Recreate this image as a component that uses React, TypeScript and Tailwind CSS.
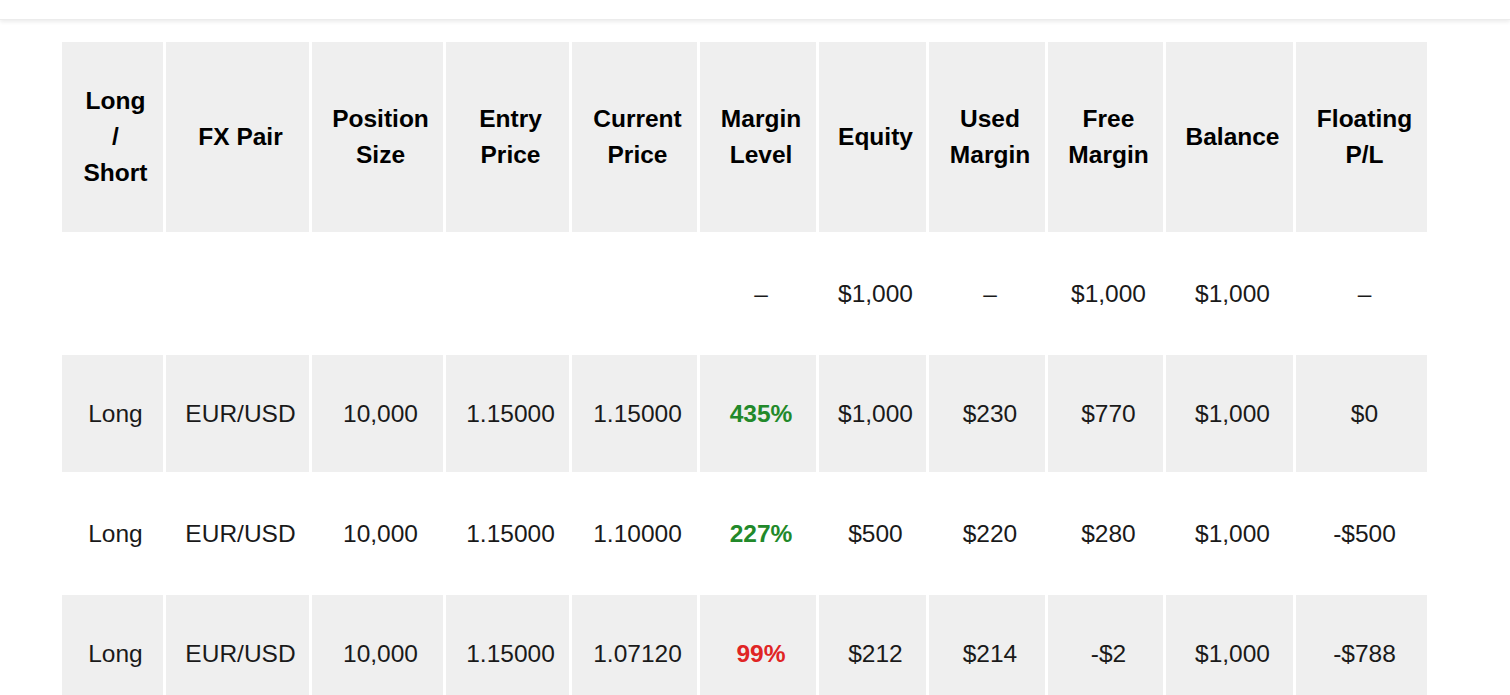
import React from 'react';

type Row = {
    side: string;
    pair: string;
    size: string;
    entry: string;
    current: string;
    margin: string;
    marginTone?: 'good' | 'bad';
    equity: string;
    used: string;
    free: string;
    balance: string;
    pl: string;
    shaded: boolean;
};

const columns = [
    { label: ['Long', '/', 'Short'], width: 'w-[101px]' },
    { label: ['FX Pair'], width: 'w-[143px]' },
    { label: ['Position', 'Size'], width: 'w-[131px]' },
    { label: ['Entry', 'Price'], width: 'w-[123px]' },
    { label: ['Current', 'Price'], width: 'w-[125px]' },
    { label: ['Margin', 'Level'], width: 'w-[116px]' },
    { label: ['Equity'], width: 'w-[107px]' },
    { label: ['Used', 'Margin'], width: 'w-[116px]' },
    { label: ['Free', 'Margin'], width: 'w-[115px]' },
    { label: ['Balance'], width: 'w-[127px]' },
    { label: ['Floating', 'P/L'], width: 'w-[131px]' },
];

const rows: Row[] = [
    { side: '', pair: '', size: '', entry: '', current: '', margin: '–', equity: '$1,000', used: '–', free: '$1,000', balance: '$1,000', pl: '–', shaded: false },
    { side: 'Long', pair: 'EUR/USD', size: '10,000', entry: '1.15000', current: '1.15000', margin: '435%', marginTone: 'good', equity: '$1,000', used: '$230', free: '$770', balance: '$1,000', pl: '$0', shaded: true },
    { side: 'Long', pair: 'EUR/USD', size: '10,000', entry: '1.15000', current: '1.10000', margin: '227%', marginTone: 'good', equity: '$500', used: '$220', free: '$280', balance: '$1,000', pl: '-$500', shaded: false },
    { side: 'Long', pair: 'EUR/USD', size: '10,000', entry: '1.15000', current: '1.07120', margin: '99%', marginTone: 'bad', equity: '$212', used: '$214', free: '-$2', balance: '$1,000', pl: '-$788', shaded: true },
];

export default function App() {
    return (
        <div className="min-h-screen bg-white font-['Liberation_Sans',Arial,sans-serif] text-[#1a1a1a]">
            {/* top bar */}
            <div className="h-[20px] bg-white shadow-[0_2px_4px_rgba(0,0,0,0.08)] border-b border-[#ececec]" />

            <div className="pl-[59px] pt-[19px]">
                <table className="border-separate border-spacing-[3px] text-[24.5px] leading-[36px] text-center">
                    <thead>
                        <tr>
                            {columns.map((c) => (
                                <th key={c.label.join(' ')} className={`${c.width} h-[190px] bg-[#efefef] font-bold text-black pl-[12px] pr-[6px]`}>
                                    {c.label.map((l) => (
                                        <div key={l}>{l}</div>
                                    ))}
                                </th>
                            ))}
                        </tr>
                    </thead>
                    <tbody>
                        {rows.map((r, i) => {
                            const cell = `h-[117px] pl-[12px] pr-[6px] ${r.shaded ? 'bg-[#efefef]' : 'bg-white'}`;
                            const tone =
                                r.marginTone === 'good'
                                    ? 'font-bold text-[#22892a]'
                                    : r.marginTone === 'bad'
                                        ? 'font-bold text-[#e02424]'
                                        : '';
                            return (
                                <tr key={i}>
                                    <td className={cell}>{r.side}</td>
                                    <td className={cell}>{r.pair}</td>
                                    <td className={cell}>{r.size}</td>
                                    <td className={cell}>{r.entry}</td>
                                    <td className={cell}>{r.current}</td>
                                    <td className={`${cell} ${tone}`}>{r.margin}</td>
                                    <td className={cell}>{r.equity}</td>
                                    <td className={cell}>{r.used}</td>
                                    <td className={cell}>{r.free}</td>
                                    <td className={cell}>{r.balance}</td>
                                    <td className={cell}>{r.pl}</td>
                                </tr>
                            );
                        })}
                    </tbody>
                </table>
            </div>
        </div>
    );
}
